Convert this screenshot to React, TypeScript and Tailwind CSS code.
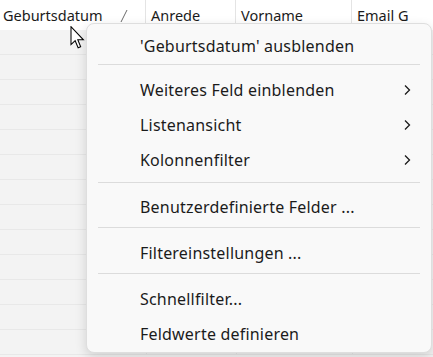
const columns = ["Geburtsdatum", "Anrede", "Vorname", "Email G"];

type Item = { label: string; sub?: boolean };

const groups: Item[][] = [
  [{ label: "'Geburtsdatum' ausblenden" }],
  [
    { label: "Weiteres Feld einblenden", sub: true },
    { label: "Listenansicht", sub: true },
    { label: "Kolonnenfilter", sub: true },
  ],
  [{ label: "Benutzerdefinierte Felder ..." }],
  [{ label: "Filtereinstellungen ..." }],
  [{ label: "Schnellfilter..." }, { label: "Feldwerte definieren" }],
];

function Chevron() {
  return (
    <svg width="8" height="12" viewBox="0 0 8 12" className="text-[#1b1b1b]">
      <path d="M2 1.5 L6.5 6 L2 10.5" fill="none" stroke="currentColor" strokeWidth="1.3" />
    </svg>
  );
}

function Cursor() {
  return (
    <svg
      width="19"
      height="23"
      viewBox="0 0 12.5 20"
      className="absolute left-[68px] top-[26px]"
    >
      <path
        d="M0.6 0.6 L0.6 16.2 L4.2 12.8 L6.8 18.9 L9 18 L6.5 12 L11.4 12 Z"
        fill="#fff"
        stroke="#000"
        strokeWidth="0.9"
        strokeLinejoin="miter"
      />
    </svg>
  );
}

function Menu() {
  return (
    <div className="absolute left-[86px] top-[23px] w-[346px] rounded-[8px] border border-[#dedede] bg-[#f9f9f9] pt-[4px] pb-[1px] shadow-[0_4px_12px_rgba(0,0,0,0.14)]">
      {groups.map((group, gi) => (
        <div key={gi}>
          {gi > 0 && (
            <div
              className={
                gi === 1
                  ? "mx-[11px] mt-px mb-[7px] h-px bg-[#dcdcdc]"
                  : gi === 2
                    ? "mx-[11px] mt-[5px] mb-[6px] h-px bg-[#dcdcdc]"
                    : "mx-[11px] mt-[3px] mb-[7px] h-px bg-[#dcdcdc]"
              }
            />
          )}
          {group.map((item) => (
            <div
              key={item.label}
              className="flex h-[35px] items-center justify-between pl-[53px] pr-[20px] text-[16px] tracking-[0.2px] text-[#1b1b1b]"
            >
              <span>{item.label}</span>
              {item.sub && <Chevron />}
            </div>
          ))}
        </div>
      ))}
    </div>
  );
}

export default function App() {
  return (
    <div
      className="relative h-[357px] w-[433px] overflow-hidden bg-[#f3f3f3]"
      style={{ fontFamily: '"Noto Sans", "Open Sans", sans-serif' }}
    >
      {/* header row */}
      <div className="grid h-[30px] grid-cols-[145px_90px_116px_1fr] bg-white text-[14.5px] text-[#1b1b1b]">
        {columns.map((c, i) => (
          <div
            key={c}
            className={
              i === 0
                ? "relative flex items-center pl-[3px] pt-[2px]"
                : "flex items-center border-l border-[#e4e4e4] pl-[5px] pt-[2px]"
            }
          >
            {c}
            {i === 0 && (
              <svg width="10" height="14" viewBox="0 0 10 14" className="absolute left-[119px] top-[9px]">
                <path d="M2 13 L8 1" stroke="#6b6b6b" strokeWidth="1" />
              </svg>
            )}
          </div>
        ))}
      </div>

      {/* body rows */}
      <div className="flex flex-col">
        {Array.from({ length: 13 }).map((_, r) => (
          <div
            key={r}
            className="grid h-[25px] grid-cols-[146px_90px_116px_1fr] border-b border-[#e8e8e8]"
          >
            <div />
            <div className="border-l border-[#e6e6e6]" />
            <div className="border-l border-[#e6e6e6]" />
            <div className="border-l border-[#e6e6e6]" />
          </div>
        ))}
      </div>

      <Menu />
      <Cursor />
    </div>
  );
}
